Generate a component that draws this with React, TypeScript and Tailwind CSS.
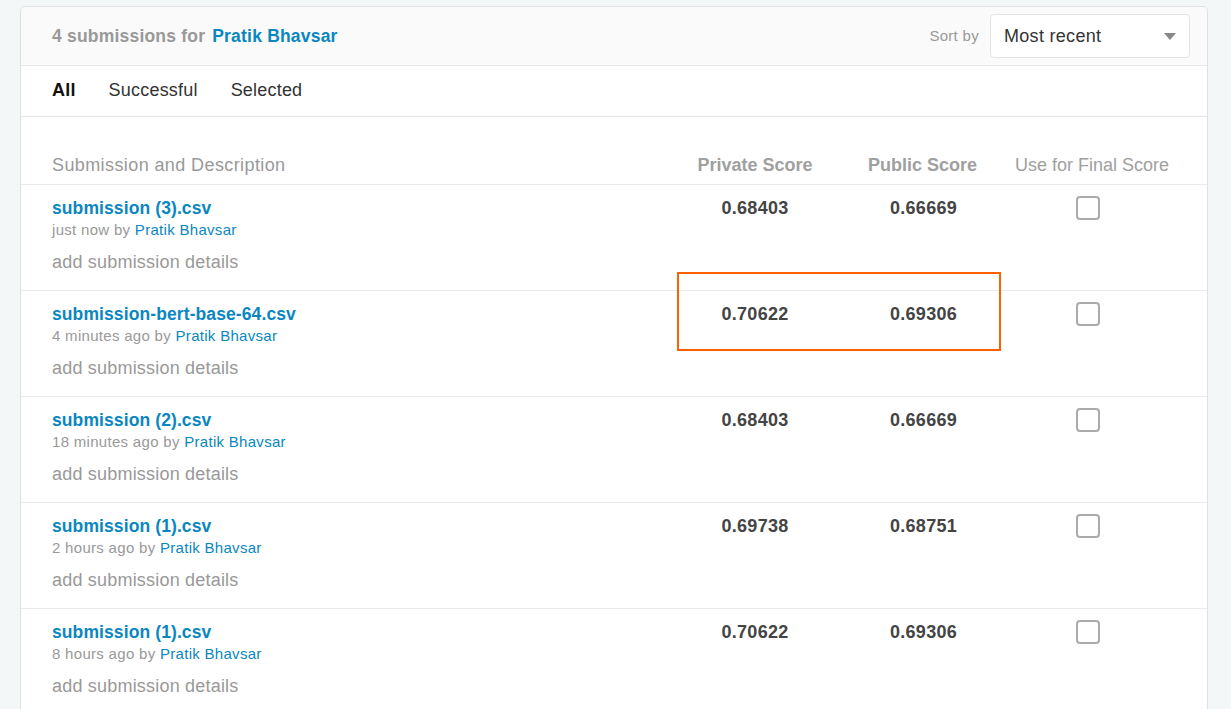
import React from "react";

interface Submission {
  file: string;
  when: string;
  privateScore: string;
  publicScore: string;
}

const submissions: Submission[] = [
  { file: "submission (3).csv", when: "just now", privateScore: "0.68403", publicScore: "0.66669" },
  { file: "submission-bert-base-64.csv", when: "4 minutes ago", privateScore: "0.70622", publicScore: "0.69306" },
  { file: "submission (2).csv", when: "18 minutes ago", privateScore: "0.68403", publicScore: "0.66669" },
  { file: "submission (1).csv", when: "2 hours ago", privateScore: "0.69738", publicScore: "0.68751" },
  { file: "submission (1).csv", when: "8 hours ago", privateScore: "0.70622", publicScore: "0.69306" },
];

const cols = "grid grid-cols-[1fr_168px_165px_168px] pl-[31px] pr-[36px]";

const SubmissionRow: React.FC<{ s: Submission }> = ({ s }) => (
  <div className={`${cols} h-[106px] border-b border-[#ebebeb]`}>
    <div className="pt-[11px]">
      <div className="text-[17.5px] leading-[24px] font-bold tracking-[0.1px] text-[#0a87c0]">{s.file}</div>
      <div className="text-[15px] leading-[20px] tracking-[0.3px] text-[#999]">
        {s.when} by <span className="text-[#0a87c0]">Pratik Bhavsar</span>
      </div>
      <div className="mt-[10px] text-[18px] leading-[24px] tracking-[0.2px] text-[#999]">add submission details</div>
    </div>
    <div className="pt-[11px] pl-[2px] text-center text-[18px] leading-[24px] font-bold tracking-[0.3px] text-[#444]">
      {s.privateScore}
    </div>
    <div className="pt-[11px] pl-[6px] text-center text-[18px] leading-[24px] font-bold tracking-[0.3px] text-[#444]">
      {s.publicScore}
    </div>
    <div className="pt-[11px] flex justify-center pl-[2px]">
      <div className="w-[24px] h-[24px] rounded-[4px] border-2 border-[#aaa] bg-white" />
    </div>
  </div>
);

export default function App() {
  return (
    <div
      className="relative h-[709px] overflow-hidden bg-[#f4f7f8] pt-[6px] pl-[20px]"
      style={{ fontFamily: '"Liberation Sans", Arial, sans-serif' }}
    >
      <div className="w-[1188px] rounded-t-[5px] border border-[#e0e0e0] bg-white">
        {/* header */}
        <div className="flex h-[59px] items-center justify-between rounded-t-[5px] border-b border-[#e6e6e6] bg-[#fafafa] pl-[31px] pr-[17px]">
          <div className="text-[17.5px] font-bold tracking-[0.2px]">
            <span className="text-[#999]">4 submissions for</span>{" "}
            <span className="ml-[2px] text-[#0a87c0]">Pratik Bhavsar</span>
          </div>
          <div className="flex items-center gap-[11px]">
            <span className="text-[15px] tracking-[0.3px] text-[#999]">Sort by</span>
            <div className="flex h-[44px] w-[200px] items-center justify-between rounded-[4px] border border-[#e3e3e3] bg-white pl-[13px] pr-[13px]">
              <span className="text-[18px] tracking-[0.3px] text-[#333]">Most recent</span>
              <svg width="12" height="7" viewBox="0 0 12 7">
                <path d="M0 0 L12 0 L6 7 Z" fill="#888" />
              </svg>
            </div>
          </div>
        </div>

        {/* tabs */}
        <div className="flex h-[51px] items-center gap-[33px] border-b border-[#e3e3e3] pl-[31px] pb-[2px] text-[18px] tracking-[0.2px]">
          <span className="font-bold text-[#111]">All</span>
          <span className="text-[#333]">Successful</span>
          <span className="text-[#333]">Selected</span>
        </div>

        {/* column headings */}
        <div className={`${cols} h-[68px] items-end border-b border-[#ebebeb] pb-[7px] text-[18px] leading-[24px]`}>
          <div className="tracking-[0.4px] text-[#999]">Submission and Description</div>
          <div className="pl-[2px] text-center font-bold text-[#a0a0a0]">Private Score</div>
          <div className="pl-[4px] text-center font-bold text-[#a0a0a0]">Public Score</div>
          <div className="pl-[10px] text-center text-[#a0a0a0] whitespace-nowrap">Use for Final Score</div>
        </div>

        {submissions.map((s, i) => (
          <SubmissionRow key={i} s={s} />
        ))}
      </div>

      {/* highlight annotation */}
      <div className="absolute left-[677px] top-[272px] h-[79px] w-[324px] border-2 border-[#ff6000]" />
    </div>
  );
}
